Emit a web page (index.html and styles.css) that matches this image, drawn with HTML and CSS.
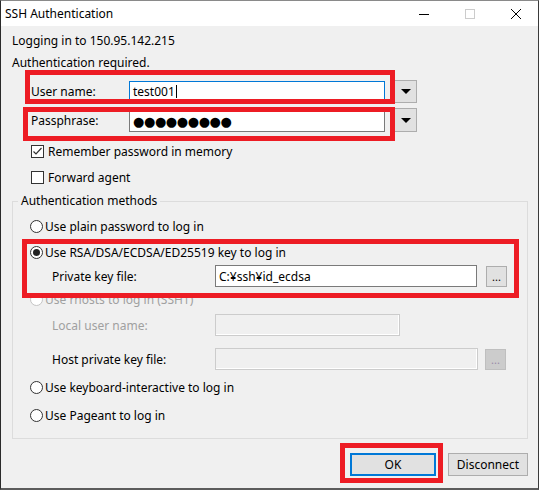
FILE: index.html
```html
<!DOCTYPE html>
<html lang="en">
<head>
    <meta charset="UTF-8">
    <meta name="viewport" content="width=device-width, initial-scale=1.0">
    <title>SSH Authentication</title>
    <link rel="stylesheet" href="styles.css">
</head>
<body>
    <div class="window">
        <div class="titlebar">
            <span class="title">SSH Authentication</span>
            <div class="win-btns">
                <span class="win-btn">
                    <svg width="10" height="10" viewBox="0 0 10 10"><path d="M0 5.5H10" stroke="#000" stroke-width="1"/></svg>
                </span>
                <span class="win-btn">
                    <svg width="10" height="10" viewBox="0 0 10 10"><rect x="0.5" y="0.5" width="9" height="9" fill="none" stroke="#ccc"/></svg>
                </span>
                <span class="win-btn">
                    <svg width="10" height="10" viewBox="0 0 10 10"><path d="M0 0L10 10M10 0L0 10" stroke="#000" stroke-width="1"/></svg>
                </span>
            </div>
        </div>

        <div class="content">
            <div class="info">Logging in to 150.95.142.215</div>
            <div class="info">Authentication required.</div>

            <div class="field-row user-row">
                <span class="field-label">User name:</span>
                <div class="textbox focused">test001<span class="caret"></span></div>
                <span class="drop-btn"><span class="arrow"></span></span>
            </div>
            <div class="field-row pass-row">
                <span class="field-label">Passphrase:</span>
                <div class="textbox dots">●●●●●●●●●</div>
                <span class="drop-btn"><span class="arrow"></span></span>
            </div>

            <div class="check-row first">
                <span class="checkbox">
                    <svg width="11" height="11" viewBox="0 0 11 11"><path d="M1.5 5.5L4 8L9.5 2" fill="none" stroke="#333" stroke-width="1.2"/></svg>
                </span>
                Remember password in memory
            </div>
            <div class="check-row second">
                <span class="checkbox"></span>
                Forward agent
            </div>

            <fieldset class="methods">
                <legend>Authentication methods</legend>

                <div class="radio-row r-plain"><span class="radio"></span>Use plain password to log in</div>
                <div class="radio-row r-key"><span class="radio checked"></span>Use RSA/DSA/ECDSA/ED25519 key to log in</div>
                <div class="sub-row r-keyfile">
                    <span class="sub-label">Private key file:</span>
                    <div class="textbox keyfile">C:¥ssh¥id_ecdsa</div>
                    <span class="browse-btn">...</span>
                </div>

                <div class="radio-row r-rhosts disabled"><span class="radio"></span>Use rhosts to log in (SSH1)</div>
                <div class="sub-row r-local">
                    <span class="sub-label disabled">Local user name:</span>
                    <div class="textbox off local"></div>
                </div>
                <div class="sub-row r-host">
                    <span class="sub-label">Host private key file:</span>
                    <div class="textbox off hostkey"></div>
                    <span class="browse-btn off">...</span>
                </div>

                <div class="radio-row r-kbd"><span class="radio"></span>Use keyboard-interactive to log in</div>
                <div class="radio-row r-pageant"><span class="radio"></span>Use Pageant to log in</div>
            </fieldset>

            <div class="button-row">
                <button class="dlg-btn default">OK</button>
                <button class="dlg-btn">Disconnect</button>
            </div>
        </div>

        <!-- red highlight frames drawn on top of the dialog -->
        <div class="mark mark-user"></div>
        <div class="mark mark-pass"></div>
        <div class="mark mark-key"></div>
        <div class="mark mark-ok"></div>
    </div>
</body>
</html>
```

FILE: styles.css
```css
body {
    margin: 0;
    font-family: "Noto Sans", "Liberation Sans", sans-serif;
    font-size: 12px;
    color: #000;
    background: #fff;
}

.window {
    position: relative;
    width: 539px;
    height: 490px;
    box-sizing: border-box;
    border-top: 1px solid #8a8a8a;
    border-left: 1px solid #2a2a2a;
    border-right: 1px solid #3a3a3a;
    border-bottom: 2px solid #5c5c5c;
    background-color: #f0f0f0;
}

/* Title bar */
.titlebar {
    height: 25px;
    background: #fff;
    display: flex;
    align-items: center;
    justify-content: space-between;
}

.title {
    padding-left: 4px;
}

.win-btns {
    display: flex;
    padding-right: 17px;
}

.win-btn {
    display: flex;
    width: 10px;
    height: 10px;
    margin-left: 36px;
}

/* Dialog body */
.content {
    padding: 4px 10px 0 11px;
}

.info {
    height: 22px;
    line-height: 22px;
}

.field-row {
    display: flex;
    align-items: center;
    padding-left: 19px;
}

.user-row {
    height: 23px;
    margin-top: 6px;
}

.pass-row {
    height: 24px;
    margin-top: 5px;
}

.pass-row .textbox {
    margin-top: 3px;
}

.field-label {
    width: 98px;
}

.textbox {
    box-sizing: border-box;
    height: 21px;
    width: 256px;
    border: 1px solid #7a7a7a;
    background: #fff;
    padding-left: 3px;
    display: flex;
    align-items: center;
    white-space: nowrap;
}

.textbox.focused {
    border-color: #0078d7;
}

.caret {
    display: inline-block;
    width: 1px;
    height: 13px;
    background: #000;
    margin-left: 1px;
}

.textbox.dots {
    font-family: "DejaVu Sans", sans-serif;
    font-size: 13px;
    letter-spacing: -0.4px;
}

.drop-btn {
    box-sizing: border-box;
    width: 23px;
    height: 100%;
    margin-left: 9px;
    background: #e1e1e1;
    border: 1px solid #adadad;
    display: flex;
    align-items: center;
    justify-content: center;
}

.arrow {
    width: 0;
    height: 0;
    border-left: 5px solid transparent;
    border-right: 5px solid transparent;
    border-top: 5px solid #000;
}

/* Check boxes */
.check-row {
    display: flex;
    align-items: center;
    height: 18px;
    padding-left: 19px;
}

.check-row.first {
    margin-top: 10px;
}

.check-row.second {
    margin-top: 8px;
}

.checkbox {
    box-sizing: border-box;
    width: 13px;
    height: 13px;
    border: 1px solid #333;
    background: #fff;
    margin-right: 4px;
    display: flex;
    align-items: center;
    justify-content: center;
}

/* Group box */
.methods {
    margin: 7px 0 0 0;
    padding: 0 0 14px 0;
    border: 1px solid #dcdcdc;
    min-width: 0;
}

.methods legend {
    padding: 0 3px;
    margin-left: 5px;
    line-height: 16px;
}

.radio-row {
    display: flex;
    align-items: center;
    height: 18px;
    padding-left: 17px;
}

.radio {
    box-sizing: border-box;
    width: 13px;
    height: 13px;
    border: 1px solid #333;
    border-radius: 50%;
    background: #fff;
    margin-right: 2px;
    display: flex;
    align-items: center;
    justify-content: center;
}

.radio.checked::after {
    content: "";
    width: 7px;
    height: 7px;
    border-radius: 50%;
    background: #222;
}

.radio-row.disabled {
    color: #a0a0a0;
}

.radio-row.disabled .radio {
    border-color: #c4c4c4;
}

.r-plain { margin-top: 8px; }
.r-key { margin-top: 8px; }
.r-rhosts { margin-top: 3px; }
.r-kbd { margin-top: 8px; }
.r-pageant { margin-top: 10px; }

.sub-row {
    display: flex;
    align-items: center;
    height: 22px;
    padding-left: 39px;
}

.r-keyfile { margin-top: 4px; }
.r-local { margin-top: 6px; }
.r-host { margin-top: 12px; }

.sub-label {
    width: 163px;
}

.sub-label.disabled {
    color: #a0a0a0;
}

.textbox.keyfile {
    width: 262px;
    height: 22px;
}

.textbox.off {
    height: 22px;
    background: #f0f0f0;
    border-color: #cccccc;
    box-shadow: inset -1px -1px 0 #fff;
}

.textbox.local {
    width: 185px;
}

.textbox.hostkey {
    width: 263px;
}

.browse-btn {
    box-sizing: border-box;
    width: 21px;
    height: 21px;
    margin-left: 9px;
    background: #e1e1e1;
    border: 1px solid #adadad;
    display: flex;
    align-items: center;
    justify-content: center;
    font-size: 11px;
    line-height: 1;
}

.browse-btn.off {
    margin-left: 7px;
    background: #cccccc;
    border-color: #bfbfbf;
    color: #9a8aa8;
}

/* Bottom buttons */
.button-row {
    display: flex;
    justify-content: flex-end;
    gap: 12px;
    margin-top: 14px;
}

.dlg-btn {
    box-sizing: border-box;
    height: 23px;
    width: 80px;
    font-family: inherit;
    font-size: 12px;
    color: #000;
    background: #e1e1e1;
    border: 1px solid #adadad;
    padding: 0;
}

.dlg-btn.default {
    width: 86px;
    border: 2px solid #0078d7;
}

/* Red highlight frames */
.mark {
    position: absolute;
    box-sizing: border-box;
    border: 5px solid #ed1c24;
}

.mark-user {
    left: 24px;
    top: 69px;
    width: 370px;
    height: 34px;
}

.mark-pass {
    left: 22px;
    top: 106px;
    width: 372px;
    height: 34px;
}

.mark-key {
    left: 21px;
    top: 238px;
    width: 497px;
    height: 59px;
}

.mark-ok {
    left: 339px;
    top: 442px;
    width: 103px;
    height: 40px;
}
```
